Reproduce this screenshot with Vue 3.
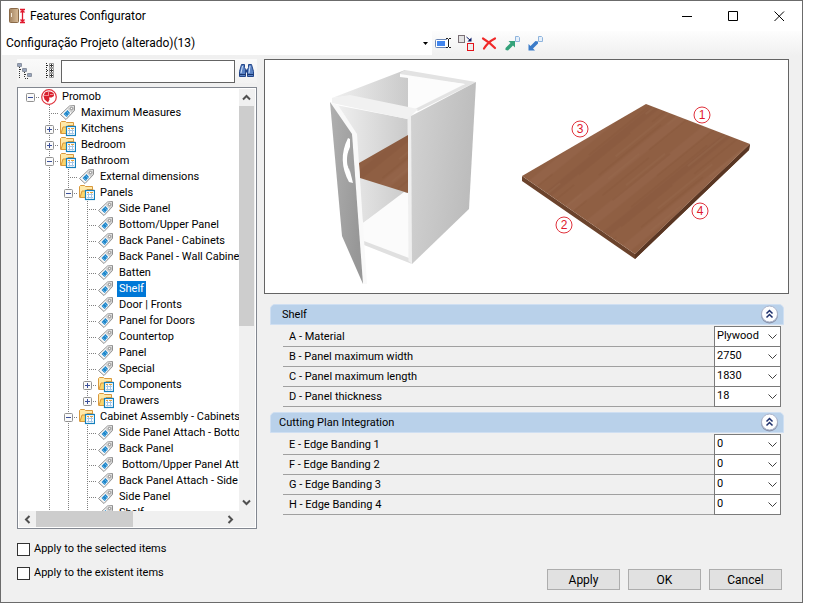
<template>
  <main class="window">
    <header class="titlebar">
      <svg class="app-icon" viewBox="0 0 17 17">
        <rect x="0.5" y="0.5" width="9" height="14" rx="1" fill="url(#door)" stroke="#8a6a48" />
        <path d="M2.5 5v4" stroke="#f4ead9" />
        <path d="M11 1.5h5M11 14.5h5M13.5 2v12M11.5 4.5l2-2 2 2M11.5 11.5l2 2 2-2" fill="none" stroke="#e0182d" stroke-width="1.3" />
        <defs>
          <linearGradient id="door" x1="0" x2="1">
            <stop offset="0" stop-color="#a38462" />
            <stop offset="1" stop-color="#d9bd98" />
          </linearGradient>
        </defs>
      </svg>
      <h1 class="title">Features Configurator</h1>
      <button class="caption-btn" type="button" aria-label="Minimize">
        <svg viewBox="0 0 11 11"><path d="M0 5.5h10" /></svg>
      </button>
      <button class="caption-btn" type="button" aria-label="Maximize">
        <svg viewBox="0 0 11 11"><path d="M0.5 0.5h9v9h-9z" /></svg>
      </button>
      <button class="caption-btn" type="button" aria-label="Close">
        <svg viewBox="0 0 11 11"><path d="M0.5 0.5l9.5 9.5M10 0.5l-9.5 9.5" /></svg>
      </button>
    </header>

    <div class="toolbar">
      <button class="config-picker" type="button">
        <span>Configuração Projeto (alterado)(13)</span>
        <svg class="caret" viewBox="0 0 5 3"><path d="M0 0h5L2.5 3z" /></svg>
      </button>
      <button class="tool" type="button" aria-label="Rename">
        <svg viewBox="0 0 17 17">
          <rect x="0.5" y="4.5" width="12" height="8" rx="1" fill="#fff" stroke="#6a86b5" />
          <rect x="2" y="6" width="8" height="5" fill="#4286ee" />
          <path d="M13.5 4v9" stroke="#fff" stroke-width="3" />
          <path d="M11 3.5h2M14 3.5h2M13.5 4v8M11 12.5h2M14 12.5h2" stroke="#222" />
        </svg>
      </button>
      <button class="tool" type="button" aria-label="Duplicate">
        <svg viewBox="0 0 17 17">
          <rect x="0.5" y="0.5" width="6" height="7" fill="#e4e4e4" stroke="#7b7076" />
          <path d="M8.5 2l4 3.5" stroke="#0b1a66" />
          <path d="M13.5 2.5v4h-4z" fill="#0b1a66" />
          <rect x="9.5" y="8.5" width="6" height="7" fill="#eee" stroke="#e3131b" />
        </svg>
      </button>
      <button class="tool" type="button" aria-label="Delete">
        <svg viewBox="0 0 17 17">
          <path d="M2 3.5Q8 7 14 13M14 3.5Q7 7 3 13.5" fill="none" stroke="#f02a2a" stroke-width="2.2" stroke-linecap="round" />
        </svg>
      </button>
      <button class="tool" type="button" aria-label="Export">
        <svg viewBox="0 0 17 17">
          <path d="M11.5 1.5h3l1 1v4h-4z" fill="#e6f0fb" stroke="#8fb4dc" />
          <path d="M4.5 6H11v6.5L9 10.5l-5 5-2.500-.5V13l5-5z" fill="#34a27a" />
        </svg>
      </button>
      <button class="tool" type="button" aria-label="Import">
        <svg viewBox="0 0 17 17">
          <path d="M11.5 1.5h3l1 1v4h-4z" fill="#e6f0fb" stroke="#8fb4dc" />
          <path d="M1.5 15.5V9l2 2 5-5 2.500.5v2l-5 5 2 2z" fill="#3b7cc9" />
        </svg>
      </button>
    </div>

    <div class="body">
      <section class="sidebar">
        <div class="search">
          <button class="tool expand" type="button" aria-label="Expand tree">
            <svg viewBox="0 0 17 17">
              <path d="M2.5 4v11M7.5 9v6M3 6.5h4M8 11.5h3M8 15.5h3" fill="none" stroke="#333" stroke-dasharray="1 1" />
              <path d="M0.5 0.5h4v3h-4zM5.5 5.5h4v3h-4zM10.5 10.5h4v3h-4z" fill="#fff" stroke="#8b93a0" />
              <path d="M1 2h3M6 7h3M11 12h3" stroke="#334a7a" />
            </svg>
          </button>
          <button class="tool" type="button" aria-label="Collapse tree">
            <svg viewBox="0 0 17 17">
              <path d="M4.5 0v16M5 2.5h2M5 7.5h2M5 12.5h2" fill="none" stroke="#222" stroke-dasharray="1 1" />
              <path d="M7.5 0.5h4v4h-4zM7.5 5.5h4v4h-4zM7.5 10.5h4v4h-4z" fill="#fff" stroke="#9a9a9a" />
              <path d="M8 2.5h3M9.5 1v3M8 7.5h3M9.5 6v3M8 12.5h3M9.5 11v3" stroke="#333" />
            </svg>
          </button>
          <input v-model="query" class="search-box" type="text" aria-label="Search" />
          <button class="tool" type="button" aria-label="Find">
            <svg viewBox="0 0 17 17">
              <path d="M3.5 1.5h3v3l1 2v7h-6v-5zM10.5 1.5h3l2 7v5h-6v-7l1-2z" fill="#5b83c4" stroke="#24478a" />
              <path d="M7 6.5h3v3H7z" fill="#24478a" />
              <path d="M4.5 3L3 10M12 3l-1 7" stroke="#cfe0f8" />
              <path d="M1.5 11.5h6M9.5 11.5h6" stroke="#1b3670" />
            </svg>
          </button>
        </div>

        <div class="tree">
          <div class="tree-main">
            <ul class="tree-rows">
              <li v-for="(row, i) in rows" :key="i" class="tree-row">
                <span v-for="n in row.depth" :key="n" class="guide" :class="{ empty: n === 1 }"></span>
                <span class="guide branch" :class="{ empty: row.depth === 0, last: row.last }">
                  <button v-if="row.state" class="expander" type="button" :aria-label="row.label">
                    <svg viewBox="0 0 9 9">
                      <rect x="0.5" y="0.5" width="8" height="8" rx="1" fill="#fafafa" stroke="#919191" />
                      <path d="M2 4.5h5" stroke="#3a4f9a" />
                      <path v-if="row.state === 'closed'" d="M4.5 2v5" stroke="#3a4f9a" />
                    </svg>
                  </button>
                </span>
                <svg v-if="row.icon === 'root'" class="node-icon" viewBox="0 0 16 16">
                  <circle cx="8" cy="8" r="7.3" fill="#fff" stroke="#e0323c" stroke-width="1.2" />
                  <path d="M4 3.5Q8 1.5 12.5 4L13 7l-2.500 1.5H8l.5 2L7 13.5l-3.500-3-1-3.500z" fill="#d8202d" />
                  <path d="M7.5 3v4M3 6.5h4M9 5.5h3" stroke="#f7a9ae" stroke-width="0.8" />
                </svg>
                <svg v-else-if="row.icon === 'folder'" class="node-icon" viewBox="0 0 16 16">
                  <path d="M0.5 12.5V1.5l1-1h4l1 1h7v4" fill="#ffe9a8" stroke="#d9993d" />
                  <path d="M1 12.5L3 6h4l1-1.500h6v8z" fill="#fbd56b" stroke="#d9993d" />
                  <rect x="6.5" y="5.5" width="9" height="9" fill="#fff" stroke="#1580bd" stroke-width="1.2" />
                  <path d="M8 7.5h2M11 7.5h3" stroke="#e8a33a" />
                  <path d="M9.5 8v5.5M12.5 8v5.5M8 9.5h6M8 12.5h6" stroke="#a5c6e6" />
                </svg>
                <svg v-else class="node-icon" viewBox="0 0 16 16">
                  <path d="M0.5 9.5L9.5 1l5-.5v5L6 14.5z" fill="#fafafa" stroke="#8e8e8e" stroke-linejoin="round" />
                  <path d="M10 2l4-.5v4L11.5 8l-4-4z" fill="#cfcfcf" />
                  <circle cx="11.5" cy="3.5" r="1.2" fill="#fff" stroke="#777" stroke-width="0.8" />
                  <path d="M7.5 5L10 8l-3.500 4-3-3z" fill="#1f86c9" />
                  <path d="M6.5 6.5l3 3M4.5 8.5l3 3" stroke="#79c2ee" stroke-width="0.7" />
                </svg>
                <span class="node-label" :class="{ selected: i === selected, lead: row.lead }">{{ row.label }}</span>
              </li>
            </ul>
            <div class="vscroll">
              <button class="arrow" type="button" aria-label="Scroll up">
                <svg viewBox="0 0 9 9"><path d="M1 6.5L4.5 3 8 6.5" /></svg>
              </button>
              <div class="vthumb"></div>
              <button class="arrow" type="button" aria-label="Scroll down">
                <svg viewBox="0 0 9 9"><path d="M1 2.5L4.5 6 8 2.5" /></svg>
              </button>
            </div>
          </div>
          <div class="hscroll">
            <button class="arrow" type="button" aria-label="Scroll left">
              <svg viewBox="0 0 9 9"><path d="M6.5 1L3 4.5 6.5 8" /></svg>
            </button>
            <div class="hthumb"></div>
            <button class="arrow" type="button" aria-label="Scroll right">
              <svg viewBox="0 0 9 9"><path d="M2.5 1L6 4.5 2.5 8" /></svg>
            </button>
          </div>
        </div>
      </section>

      <section class="details">
        <div class="preview">
          <svg class="drawing" viewBox="265 60 523 233">
            <defs>
              <linearGradient id="side" x1="0" y1="0" x2="1" y2="0.3">
                <stop offset="0" stop-color="#d3d3d3" />
                <stop offset="1" stop-color="#bcbcbc" />
              </linearGradient>
              <linearGradient id="leaf" x1="0" y1="0" x2="1" y2="0.5">
                <stop offset="0" stop-color="#b0b0b0" />
                <stop offset="1" stop-color="#979797" />
              </linearGradient>
              <linearGradient id="inner" x1="0" x2="1">
                <stop offset="0" stop-color="#f0f0f0" />
                <stop offset="1" stop-color="#cacaca" />
              </linearGradient>
              <pattern id="wood" width="170" height="67" patternUnits="userSpaceOnUse" patternTransform="rotate(-39)">
                <rect width="170" height="67" fill="#8f5f43" />
                <path d="M0 9h170M0 51h170" stroke="#936348" stroke-width="9" />
                <path d="M0 27h170" stroke="#8b5b40" stroke-width="7" />
                <path d="M10 5h74M60 14h90M20 22h98M0 31h66M90 36h70M15 44h80M70 56h90M5 62h60" stroke="#87573c" stroke-width="0.8" />
                <path d="M30 2h50M90 26h60M40 40h70M100 48h60M20 53h40" stroke="#976a4d" stroke-width="0.8" />
              </pattern>
            </defs>

            <!-- cabinet -->
            <path d="M332 98L405 70l3 8v30l-60-12z" fill="url(#inner)" />
            <path d="M408 78l58 7-48 25-10-2z" fill="#fcfcfc" />
            <path d="M405 70l71 12-58 29-3-2 50-25-65-8v-3z" fill="#e3e3e3" />
            <path d="M400 74l65 10-2 1-55-7-8-1z" fill="#fcfcfc" />
            <path d="M336 105l72 14v73l-45 31z" fill="url(#inner)" />
            <path d="M404 192l5 2v65l-46-18v-18z" fill="#fbfbfb" />
            <path d="M332 98l18-3 68 14-7 7v3h-4l-75-16z" fill="#f1f1f1" />
            <path d="M364 241l45 17 3 6-48-19z" fill="#e0e0e0" />
            <path d="M407.5 119l3.500-3 1.500 148-4-3z" fill="#efefef" />
            <path d="M411 116l65-34-7 127-57 55z" fill="url(#side)" />
            <path d="M408 135v58l-48-15-1-15z" fill="url(#wood)" />

            <!-- open door -->
            <path d="M330 102l8 3 19 29 10 150h-4l-11-149z" fill="#f9f9f9" />
            <path d="M330 102l22 32 11 150-21-48z" fill="url(#leaf)" />
            <path d="M348 138l2 1v8q-6 13 0 24l3 12-4-1q-12-22-1-44z" fill="#fff" />
            <path d="M350 147q-4 11 0 25q-6-12 0-25" fill="#a2a2a2" />

            <!-- loose shelf board -->
            <path d="M522 176l113 78 115-110-1 6-114 109-113-78z" fill="#6b432c" />
            <path d="M635 254v5l114-109 1-6z" fill="#593623" />
            <path d="M646 104l104 40-115 110-113-78z" fill="url(#wood)" />

            <g v-for="mark in marks" :key="mark.n" class="mark">
              <circle :cx="mark.x" :cy="mark.y" r="8" />
              <text :x="mark.x" :y="mark.y + 4">{{ mark.n }}</text>
            </g>
          </svg>
        </div>

        <section v-for="group in groups" :key="group.title" class="group">
          <header class="group-head">
            <h2 class="group-title" :class="{ wide: group.wide }">{{ group.title }}</h2>
            <button class="collapse" type="button" aria-label="Collapse">
              <svg viewBox="0 0 19 19">
                <circle cx="9.5" cy="10" r="8.5" fill="#8790a8" />
                <circle cx="9.5" cy="9" r="8" fill="#fdfdfe" stroke="#a9b3ca" />
                <path d="M6.5 8.5l3-3 3 3M6.5 12.5l3-3 3 3" fill="none" stroke="#1d2f6b" stroke-width="1.5" />
              </svg>
            </button>
          </header>
          <div class="fields">
            <div v-for="field in group.fields" :key="field.id" class="field">
              <label class="field-label" :for="field.id">{{ field.label }}</label>
              <div class="combo">
                <select :id="field.id" v-model="field.value">
                  <option :value="field.value">{{ field.value }}</option>
                </select>
                <svg class="combo-arrow" viewBox="0 0 9 5"><path d="M0.5 0.5l4 4 4-4" /></svg>
              </div>
            </div>
          </div>
        </section>
      </section>
    </div>

    <footer class="footer">
      <div class="options">
        <label class="option"><input v-model="applySelected" type="checkbox" />Apply to the selected items</label>
        <label class="option"><input v-model="applyExistent" type="checkbox" />Apply to the existent items</label>
      </div>
      <div class="actions">
        <button type="button">Apply</button>
        <button type="button">OK</button>
        <button type="button">Cancel</button>
      </div>
    </footer>
  </main>
</template>

<script setup>
import { ref, reactive } from 'vue';

const query = ref('');
const selected = ref(12);
const applySelected = ref(false);
const applyExistent = ref(false);

const rows = [
  { depth: 0, label: 'Promob', icon: 'root', state: 'open' },
  { depth: 1, label: 'Maximum Measures' },
  { depth: 1, label: 'Kitchens', icon: 'folder', state: 'closed' },
  { depth: 1, label: 'Bedroom', icon: 'folder', state: 'closed' },
  { depth: 1, label: 'Bathroom', icon: 'folder', state: 'open' },
  { depth: 2, label: 'External dimensions' },
  { depth: 2, label: 'Panels', icon: 'folder', state: 'open' },
  { depth: 3, label: 'Side Panel' },
  { depth: 3, label: 'Bottom/Upper Panel' },
  { depth: 3, label: 'Back Panel - Cabinets' },
  { depth: 3, label: 'Back Panel - Wall Cabinets' },
  { depth: 3, label: 'Batten' },
  { depth: 3, label: 'Shelf' },
  { depth: 3, label: 'Door | Fronts' },
  { depth: 3, label: 'Panel for Doors' },
  { depth: 3, label: 'Countertop' },
  { depth: 3, label: 'Panel' },
  { depth: 3, label: 'Special' },
  { depth: 3, label: 'Components', icon: 'folder', state: 'closed' },
  { depth: 3, label: 'Drawers', icon: 'folder', state: 'closed', last: true },
  { depth: 2, label: 'Cabinet Assembly - Cabinets', icon: 'folder', state: 'open' },
  { depth: 3, label: 'Side Panel Attach - Bottom' },
  { depth: 3, label: 'Back Panel' },
  { depth: 3, label: 'Bottom/Upper Panel Attach', lead: true },
  { depth: 3, label: 'Back Panel Attach - Side' },
  { depth: 3, label: 'Side Panel' },
  { depth: 3, label: 'Shelf' }
];

const marks = [
  { n: 1, x: 702, y: 115 },
  { n: 2, x: 564, y: 225 },
  { n: 3, x: 580, y: 129 },
  { n: 4, x: 700, y: 211 }
];

const groups = reactive([
  {
    title: 'Shelf',
    fields: [
      { id: 'a', label: 'A - Material', value: 'Plywood' },
      { id: 'b', label: 'B - Panel maximum width', value: '2750' },
      { id: 'c', label: 'C - Panel maximum length', value: '1830' },
      { id: 'd', label: 'D - Panel thickness', value: '18' }
    ]
  },
  {
    title: 'Cutting Plan Integration',
    wide: true,
    fields: [
      { id: 'e', label: 'E - Edge Banding 1', value: '0' },
      { id: 'f', label: 'F - Edge Banding 2', value: '0' },
      { id: 'g', label: 'G - Edge Banding 3', value: '0' },
      { id: 'h', label: 'H - Edge Banding 4', value: '0' }
    ]
  }
]);
</script>

<style>
body {
  background: #fff;
}
</style>

<style scoped>
.window {
  box-sizing: border-box;
  height: calc(100vh - 7px);
  min-height: 560px;
  margin-right: 16px;
  border: 1px solid #6b6b6b;
  background: #f0f0f0;
  display: flex;
  flex-direction: column;
  font-family: Roboto, "Liberation Sans", sans-serif;
  font-size: 11px;
  line-height: 16px;
  color: #000;
}

button, select, input {
  font: inherit;
  color: inherit;
  box-sizing: border-box;
}

button {
  padding: 0;
  border: 0;
  background: none;
}

svg {
  display: block;
}

/* Title bar */
.titlebar {
  display: flex;
  height: 30px;
  align-items: center;
  padding-left: 8px;
  background: #fff;
}

.app-icon {
  width: 17px;
  height: 17px;
}

.title {
  flex: 1;
  margin: 0 0 0 4px;
  font-size: 12px;
  font-weight: 400;
}

.caption-btn {
  width: 46px;
  height: 30px;
  display: flex;
  align-items: center;
  justify-content: center;
}

.caption-btn svg {
  width: 11px;
  height: 11px;
  fill: none;
  stroke: #000;
}

/* Toolbar */
.toolbar {
  display: flex;
  height: 28px;
  padding-left: 1px;
  align-items: flex-start;
  background: linear-gradient(#fdfdfd, #f0f0f0 90%);
}

.config-picker {
  width: 430px;
  height: 24px;
  display: flex;
  align-items: center;
  justify-content: space-between;
  padding: 0 4px;
  background: #fff;
  font-size: 12px;
}

.caret {
  width: 5px;
  height: 3px;
}

.tool {
  width: 23px;
  height: 24px;
  flex: none;
  display: flex;
  align-items: center;
  justify-content: center;
}

.tool svg {
  width: 17px;
  height: 17px;
}

/* Body */
.body {
  flex: 1;
  min-height: 0;
  display: flex;
  gap: 7px;
  padding: 0 13px 0 16px;
}

.sidebar {
  width: 240px;
  flex: none;
  display: flex;
  flex-direction: column;
  gap: 4px;
}

.search {
  display: flex;
  height: 24px;
  align-items: center;
  background: linear-gradient(#fafafa, #f2f2f2);
}

.search .tool {
  width: 22px;
}

.search .expand {
  justify-content: flex-start;
}

.search-box {
  flex: 1;
  min-width: 0;
  height: 23px;
  padding: 0 4px;
  border: 1px solid #646464;
  background: #fff;
}

/* Tree */
.tree {
  flex: 1;
  min-height: 0;
  display: flex;
  flex-direction: column;
  padding: 1px;
  border: 1px solid #828790;
  background: #fff;
}

.tree-main {
  flex: 1;
  min-height: 0;
  display: flex;
}

.tree-rows {
  flex: 1;
  min-width: 0;
  margin: 0;
  padding: 0 0 0 2px;
  overflow: hidden;
  list-style: none;
}

.tree-row {
  display: flex;
  height: 16px;
  white-space: nowrap;
}

.guide {
  width: 19px;
  height: 16px;
  flex: none;
  background: repeating-linear-gradient(#808080 0 1px, transparent 1px 2px) 9px 0 / 1px 100% no-repeat;
}

.branch {
  display: flex;
  align-items: center;
  justify-content: center;
  background:
    repeating-linear-gradient(#808080 0 1px, transparent 1px 2px) 9px 0 / 1px 100% no-repeat,
    repeating-linear-gradient(90deg, #808080 0 1px, transparent 1px 2px) 9px 8px / 10px 1px no-repeat;
}

.branch.last {
  background-size: 1px 50%, 10px 1px;
}

.guide.empty {
  background-size: 0 0, 10px 1px;
}

.expander svg {
  width: 9px;
  height: 9px;
}

.node-icon {
  width: 16px;
  height: 16px;
  flex: none;
  margin-left: 1px;
}

.node-label {
  margin-left: 3px;
  padding: 0 2px;
}

.node-label.lead {
  padding-left: 5px;
}

.node-label.selected {
  background: #0078d7;
  color: #fff;
}

.vscroll {
  width: 16px;
  flex: none;
  display: flex;
  flex-direction: column;
  background: #f0f0f0;
}

.hscroll {
  height: 16px;
  flex: none;
  display: flex;
  padding-right: 16px;
  background: #f0f0f0;
}

.vthumb {
  height: 220px;
  margin-right: 1px;
  background: #cdcdcd;
}

.hthumb {
  width: 97px;
  background: #cdcdcd;
}

.arrow {
  width: 17px;
  height: 17px;
  flex: none;
  display: flex;
  align-items: center;
  justify-content: center;
}

.arrow svg {
  width: 9px;
  height: 9px;
  fill: none;
  stroke: #505050;
  stroke-width: 2;
}

.vscroll .arrow {
  width: 15px;
}

.vscroll .arrow:last-child {
  margin-top: auto;
}

.hscroll .arrow:last-child {
  margin-left: auto;
}

/* Details */
.details {
  flex: 1;
  min-width: 0;
}

.preview {
  margin-bottom: 10px;
  border: 1px solid #646464;
  background: #fff;
}

.drawing {
  width: 100%;
}

.mark circle {
  fill: #fff;
  stroke: #e0323c;
}

.mark text {
  fill: #e0182d;
  font-family: "Liberation Sans", sans-serif;
  font-size: 12px;
  text-anchor: middle;
}

.group {
  margin: 0 5px 5px 6px;
}

.group-head {
  display: flex;
  box-sizing: border-box;
  height: 21px;
  align-items: center;
  justify-content: space-between;
  padding: 0 4px 0 8px;
  border: 1px solid #cfdff2;
  border-radius: 5px 5px 0 0;
  background: #b9d1ea;
}

.group-title {
  margin: 0 0 0 3px;
  font-size: inherit;
  font-weight: 400;
}

.group-title.wide {
  margin-left: 0;
}

.collapse svg {
  width: 19px;
  height: 19px;
}

.fields {
  margin: 2px 3px 0 13px;
}

.field {
  display: flex;
  box-sizing: border-box;
  height: 20px;
  border-bottom: 1px solid #a0a0a0;
}

.field-label {
  flex: 1;
  padding: 2px 0 0 6px;
}

.combo {
  position: relative;
  width: 67px;
  height: 21px;
  margin-top: -1px;
}

.combo select {
  display: block;
  width: 100%;
  height: 21px;
  padding: 0 16px 2px 2px;
  appearance: none;
  border: 1px solid #7a7a7a;
  border-radius: 0;
  background: #fff;
}

.combo-arrow {
  position: absolute;
  top: 8px;
  right: 4px;
  width: 9px;
  height: 5px;
  fill: none;
  stroke: #404040;
  pointer-events: none;
}

/* Footer */
.footer {
  display: flex;
  justify-content: space-between;
  align-items: flex-end;
  padding: 12px 20px 12px 16px;
}

.options {
  display: flex;
  flex-direction: column;
  gap: 8px;
  margin-bottom: 9px;
}

.option {
  display: flex;
  align-items: center;
  gap: 4px;
}

.option input {
  width: 13px;
  height: 13px;
  margin: 0;
  appearance: none;
  border: 1px solid #333;
  background: #fff;
}

.actions {
  display: flex;
  gap: 8px;
}

.actions button {
  width: 73px;
  height: 21px;
  border: 1px solid #adadad;
  background: #e1e1e1;
  font-size: 12px;
}
</style>
